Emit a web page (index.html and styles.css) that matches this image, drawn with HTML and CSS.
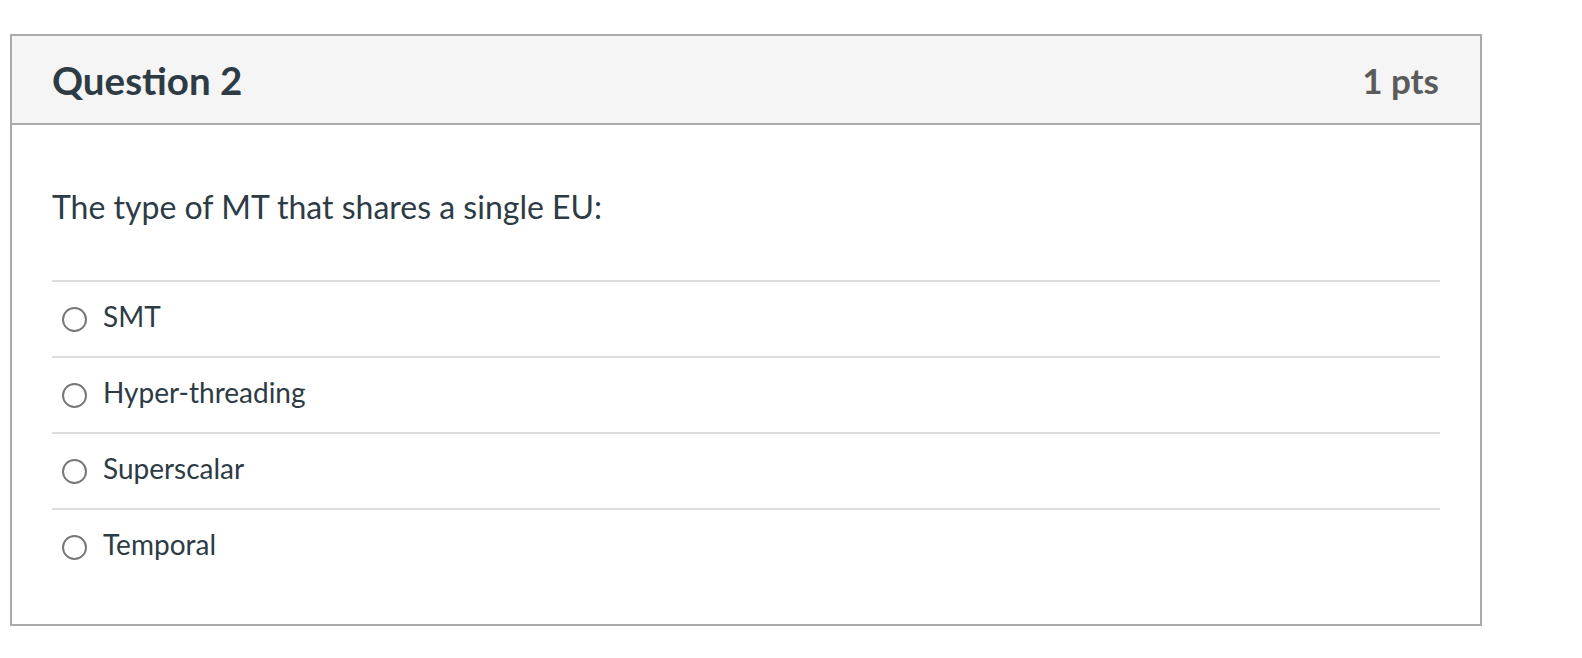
FILE: index.html
```html
<!DOCTYPE html>
<html lang="en">
<head>
<meta charset="utf-8">
<title>Question 2</title>
<link rel="stylesheet" href="styles.css">
</head>
<body>
<div class="question">
  <div class="header">
    <span class="name">Question 2</span>
    <span class="points">1 pts</span>
  </div>
  <div class="content">
    <div class="question-text">The type of MT that shares a single EU:</div>
    <div class="answers">
      <label class="answer"><span class="radio"></span><span class="label">SMT</span></label>
      <label class="answer"><span class="radio"></span><span class="label">Hyper-threading</span></label>
      <label class="answer"><span class="radio"></span><span class="label">Superscalar</span></label>
      <label class="answer"><span class="radio"></span><span class="label">Temporal</span></label>
    </div>
  </div>
</div>
</body>
</html>
```

FILE: styles.css
```css
html, body {
  margin: 0;
  padding: 0;
  background: #ffffff;
}

body {
  font-family: Lato, "Open Sans", "Liberation Sans", sans-serif;
  color: #2d3b45;
}

.question {
  box-sizing: border-box;
  width: 1472px;
  margin: 34px 0 0 10px;
  border: 2px solid #aaaaaa;
}

.header {
  box-sizing: border-box;
  height: 89px;
  background: #f5f5f5;
  border-bottom: 2px solid #aaaaaa;
  display: flex;
  justify-content: space-between;
  align-items: center;
  padding: 0 41px 0 40px;
}

.name {
  font-size: 38.5px;
  font-weight: 700;
  color: #2d3b45;
}

.points {
  font-size: 35px;
  font-weight: 700;
  color: #5b5b5b;
}

.content {
  padding: 0 40px 40px 40px;
}

.question-text {
  font-size: 32px;
  line-height: 40px;
  padding-top: 62px;
  padding-bottom: 53px;
}

.answer {
  box-sizing: border-box;
  height: 76px;
  border-top: 2px solid #dddddd;
  display: flex;
  align-items: center;
}

.radio {
  box-sizing: border-box;
  width: 25px;
  height: 25px;
  margin-left: 10px;
  margin-right: 16px;
  border: 2px solid #777777;
  border-radius: 50%;
  flex: none;
}

.label {
  font-size: 28px;
  line-height: 32px;
  margin-bottom: 7px;
}
```
